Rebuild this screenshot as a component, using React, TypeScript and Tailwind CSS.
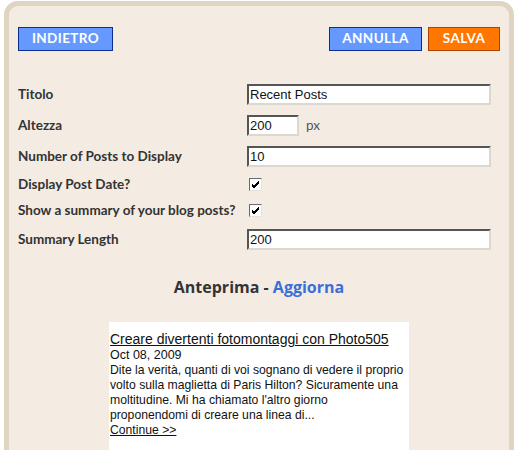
import { ReactNode } from 'react'

const labelFont = "font-['Lato',_'DejaVu_Sans',_sans-serif]"
const headFont = "font-['Open_Sans',_'DejaVu_Sans',_sans-serif]"

function Btn({ children, orange, w }: { children: ReactNode; orange?: boolean; w: string }) {
  return (
    <button
      className={`${w} h-[24px] border text-white text-[13.5px] font-bold tracking-[0.4px] leading-none ${labelFont} ${
        orange ? 'bg-[#ff7700] border-[#a84300]' : 'bg-[#6699ff] border-[#0b2f8a]'
      }`}
    >
      {children}
    </button>
  )
}

function TextInput({ value, w = 'w-[244px]' }: { value: string; w?: string }) {
  return (
    <div
      className={`${w} h-[21px] bg-white border-2 border-t-[#555] border-l-[#555] border-b-[#dcd8d0] border-r-[#dcd8d0] pl-[1px] flex items-center text-[13px] text-[#111] font-['Liberation_Sans',_Arial,_sans-serif]`}
    >
      {value}
    </div>
  )
}

function Check() {
  return (
    <span className="ml-[2px] w-[13px] h-[13px] bg-white border border-t-[#6b6b6b] border-l-[#6b6b6b] border-b-[#e6e3de] border-r-[#e6e3de] flex items-center justify-center">
      <svg width="9" height="9" viewBox="0 0 9 9">
        <path d="M1 4 L3 6 L8 1 M1 5 L3 7 L8 2 M1 6 L3 8 L8 3" stroke="#000" strokeWidth="1" fill="none" />
      </svg>
    </span>
  )
}

function Row({ label, h, children }: { label: string; h: string; children: ReactNode }) {
  return (
    <div className={`flex items-center ${h}`}>
      <div className={`w-[229px] whitespace-nowrap text-[13.5px] font-bold text-[#333] ${labelFont}`}>{label}</div>
      <div className="flex items-center">{children}</div>
    </div>
  )
}

export default function App() {
  return (
    <div className="bg-white h-[450px] overflow-hidden">
      <div className="ml-[4px] mt-[1px] w-[510px] min-h-[449px] border-[5px] border-b-0 border-[#e0d5c2] rounded-t-[14px] bg-[#f4ece3] px-[9px] pt-[21px]">
        {/* Top buttons */}
        <div className="flex items-center">
          <Btn w="w-[95px]">INDIETRO</Btn>
          <div className="ml-auto flex gap-[6px]">
            <Btn w="w-[93px]">ANNULLA</Btn>
            <Btn w="w-[72px]" orange>
              SALVA
            </Btn>
          </div>
        </div>

        {/* Form */}
        <div className="mt-[28px]">
          <Row label="Titolo" h="h-[31px]">
            <TextInput value="Recent Posts" />
          </Row>
          <Row label="Altezza" h="h-[31px]">
            <TextInput value="200" w="w-[52px]" />
            <span className={`ml-[7px] text-[13.5px] text-[#555] ${labelFont}`}>px</span>
          </Row>
          <Row label="Number of Posts to Display" h="h-[31px]">
            <TextInput value="10" />
          </Row>
          <Row label="Display Post Date?" h="h-[25px]">
            <Check />
          </Row>
          <Row label="Show a summary of your blog posts?" h="h-[27px]">
            <Check />
          </Row>
          <Row label="Summary Length" h="h-[31px]">
            <TextInput value="200" />
          </Row>
        </div>

        {/* Preview */}
        <div className={`mt-[22px] text-center text-[16px] font-bold text-[#333] leading-[20px] ${headFont}`}>
          Anteprima - <span className="text-[#3a6fd8]">Aggiorna</span>
        </div>
        <div className="mt-[25px] ml-[91px] w-[300px] bg-white pt-[9px] pb-[40px] pl-[1px] font-['Liberation_Sans',_Arial,_sans-serif] text-[#111]">
          <a className="block text-[14px] leading-[16px] underline">Creare divertenti fotomontaggi con Photo505</a>
          <div className="text-[12.5px] leading-[15px] mt-[1px]">Oct 08, 2009</div>
          <p className="text-[12.2px] leading-[15px]">
            Dite la verità, quanti di voi sognano di vedere il proprio volto sulla maglietta di Paris Hilton?
            Sicuramente una moltitudine. Mi ha chiamato l'altro giorno proponendomi di creare una linea di...
          </p>
          <a className="block text-[12.2px] leading-[15px] underline">Continue &gt;&gt;</a>
        </div>
      </div>
    </div>
  )
}
